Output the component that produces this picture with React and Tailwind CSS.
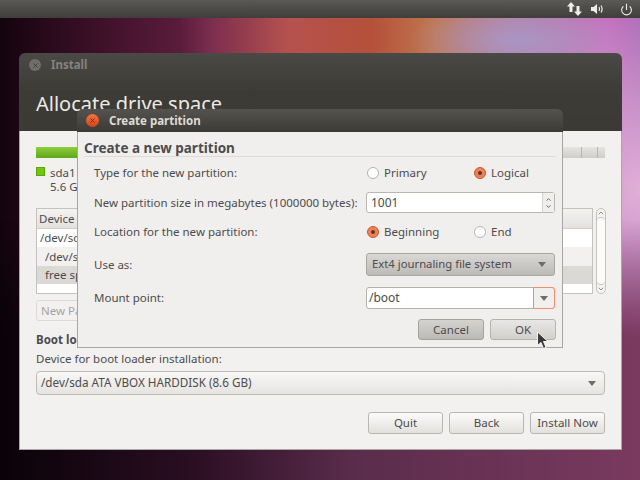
import { ChevronDown, ChevronUp, Power, X } from "lucide-react";

const font = "font-['Noto_Sans','Open_Sans',sans-serif]";

function Arrow({ className = "" }) {
  return <span className={`block w-0 h-0 border-x-[4px] border-x-transparent border-t-[5px] border-t-[#6f6d68] ${className}`} />;
}

function Radio({ label, on, width }) {
  return (
    <div className={`flex items-center gap-[5px] ${width}`}>
      {on ? (
        <span className="w-[12px] h-[12px] rounded-full border border-[#c8592e] bg-[#ee8155] flex items-center justify-center">
          <span className="w-[4px] h-[4px] rounded-full bg-[#5a3528]" />
        </span>
      ) : (
        <span className="w-[12px] h-[12px] rounded-full border border-[#b5b3ae] bg-white" />
      )}
      <span>{label}</span>
    </div>
  );
}

function Row({ label, height, children }) {
  return (
    <div className={`flex items-center ${height}`}>
      <div className="w-[272px] shrink-0 whitespace-nowrap">{label}</div>
      <div className="w-[189px]">{children}</div>
    </div>
  );
}

function PlainButton({ children }) {
  return (
    <button className="w-[75px] h-[22px] rounded-[3px] border border-[#b9b7b1] bg-gradient-to-b from-[#fbfbfa] to-[#e3e1de] text-[#4c4c4c]">
      {children}
    </button>
  );
}

function InstallWindow() {
  return (
    <div className="absolute left-[19px] top-[53px] w-[603px] h-[397px] flex flex-col rounded-t-[6px] overflow-hidden">
      <div className="h-[78px] bg-gradient-to-b from-[#4a4945] via-[#3d3b36] to-[#3c3a35]">
        <div className="h-[24px] flex items-center pl-[10px] gap-[10px] text-[#85837c] font-bold text-[11.5px]">
          <span className="w-[12px] h-[12px] rounded-full bg-[#706e69] flex items-center justify-center">
            <X size={7} strokeWidth={3} className="text-[#3c3a35]" />
          </span>
          Install
        </div>
        <div className="pl-[17px] pt-[13px] text-[20px] leading-[28px] text-[#eceae6]">Allocate drive space</div>
      </div>
      <div className="flex-1 bg-[#f2f1f0] pl-[16px] pt-[16px] text-[11.5px] text-[#4c4c4c] border-b border-x border-[#a9a7a3]">
        <div className="h-[11px] w-[569px] flex bg-gradient-to-b from-[#e6e5e2] to-[#cfcdc9]">
          <div className="w-[220px] bg-gradient-to-b from-[#8fce3c] to-[#5fa818]" />
          <div className="ml-auto w-[16px] border-l border-[#b8b6b1]" />
          <div className="w-[8px] border-l border-[#b8b6b1]" />
        </div>
        <div className="mt-[8px] h-[36px] flex gap-[5px] leading-[14px]">
          <span className="w-[9px] h-[9px] mt-[1px] bg-[#6fc80f] border border-[#5ba50e]" />
          <div>
            <div>sda1</div>
            <div>5.6 GB</div>
          </div>
        </div>
        <div className="mt-[6px] flex gap-[3px] items-start">
          <div className="w-[557px] h-[86px] border border-[#c4c2bd] bg-white">
            <div className="h-[20px] px-[2px] flex items-center bg-gradient-to-b from-[#f4f3f2] to-[#e4e2df] border-b border-[#cfcdc9]">Device</div>
            <div className="h-[18px] px-[3px] flex items-center">/dev/sda</div>
            <div className="h-[19px] pl-[8px] flex items-center bg-[#f2f1f0]">/dev/sda1</div>
            <div className="h-[18px] pl-[8px] flex items-center bg-[#dbd9d5]">free space</div>
          </div>
          <div className="w-[10px] h-[86px] rounded-[5px] border border-[#c4c2bd] bg-[#f4f3f2] flex flex-col items-center justify-between">
            <ChevronUp size={8} strokeWidth={2.5} className="text-[#7c7a75]" />
            <div className="flex-1 w-full rounded-[5px] border-y border-[#c4c2bd] bg-[#fbfbfa]" />
            <ChevronDown size={8} strokeWidth={2.5} className="text-[#7c7a75]" />
          </div>
        </div>
        <div className="mt-[6px] h-[21px] w-[130px] rounded-[3px] border border-[#dcdad6] flex items-center pl-[4px] text-[#a6a4a0] whitespace-nowrap">New Partition Table...</div>
        <div className="mt-[11px] font-bold leading-[16px]">Boot loader</div>
        <div className="mt-[3px] leading-[16px]">Device for boot loader installation:</div>
        <div className="mt-[4px] h-[24px] w-[569px] rounded-[4px] border border-[#bdbbb6] bg-gradient-to-b from-[#f8f8f7] to-[#e6e4e1] flex items-center justify-between pl-[4px] pr-[8px] text-[11.7px]">
          /dev/sda ATA VBOX HARDDISK (8.6 GB)
          <Arrow />
        </div>
        <div className="mt-[17px] w-[569px] flex justify-end gap-[6px]">
          <PlainButton>Quit</PlainButton>
          <PlainButton>Back</PlainButton>
          <PlainButton>Install Now</PlainButton>
        </div>
      </div>
    </div>
  );
}

function PartitionDialog() {
  return (
    <div className="absolute left-[77px] top-[109px] w-[486px] h-[239px] flex flex-col rounded-t-[6px] overflow-hidden text-[11.5px] text-[#4c4c4c]">
      <div className="h-[23px] shrink-0 pl-[9px] flex items-center gap-[10px] bg-gradient-to-b from-[#55534f] to-[#3c3a35] text-[#dfdbd2] font-bold text-[11.5px]">
        <span className="w-[13px] h-[13px] rounded-full bg-gradient-to-b from-[#f4733b] to-[#d4441a] flex items-center justify-center">
          <X size={7} strokeWidth={3} className="text-[#6b2a12]" />
        </span>
        Create partition
      </div>
      <div className="flex-1 bg-[#f0efee] border-x border-b border-[#a9a7a3] pl-[6px] pr-[6px]">
        <div className="h-[25px] pt-[6px] font-bold text-[13.5px] leading-[20px] border-b border-[#dddbd8]">Create a new partition</div>
        <div className="pl-[10px]">
          <Row label="Type for the new partition:" height="h-[31px]">
            <div className="flex pl-[1px]">
              <Radio label="Primary" width="w-[107px]" />
              <Radio label="Logical" on />
            </div>
          </Row>
          <Row label="New partition size in megabytes (1000000 bytes):" height="h-[29px]">
            <div className="h-[21px] rounded-[3px] border border-[#b9b7b1] bg-white flex items-center justify-between pl-[4px] text-[12px]">
              1001
              <div className="w-[12px] h-full border-l border-[#d6d4d0] bg-[#f0efee] flex flex-col items-center justify-center text-[#5c5a56]">
                <ChevronUp size={7} strokeWidth={3} />
                <ChevronDown size={7} strokeWidth={3} />
              </div>
            </div>
          </Row>
          <Row label="Location for the new partition:" height="h-[30px]">
            <div className="flex pl-[1px]">
              <Radio label="Beginning" on width="w-[107px]" />
              <Radio label="End" />
            </div>
          </Row>
          <Row label="Use as:" height="h-[35px]">
            <div className="h-[23px] rounded-[3px] border border-[#a9a7a2] bg-gradient-to-b from-[#d9d8d5] to-[#bdbbb7] flex items-center justify-between pl-[5px] pr-[8px] text-[11.3px] whitespace-nowrap">
              Ext4 journaling file system
              <Arrow />
            </div>
          </Row>
          <Row label="Mount point:" height="h-[32px]">
            <div className="h-[22px] rounded-[3px] border border-[#b4b2ad] bg-white flex items-center justify-between pl-[2px] text-[12px]">
              /boot
              <div className="w-[22px] h-[22px] -mr-px rounded-r-[3px] border border-[#ee8f6c] bg-[#f0efee] flex items-center justify-center">
                <Arrow />
              </div>
            </div>
          </Row>
        </div>
        <div className="mt-[5px] flex justify-end gap-[6px]">
          <button className="w-[66px] h-[21px] rounded-[3px] border border-[#a5a39e] bg-gradient-to-b from-[#d4d3d0] to-[#bcbab6]">Cancel</button>
          <button className="w-[66px] h-[21px] rounded-[3px] border border-[#b5b3ae] bg-gradient-to-b from-[#e8e7e5] to-[#d2d0cd]">OK</button>
        </div>
      </div>
    </div>
  );
}

export default function App() {
  return (
    <div className={`relative w-[640px] h-[480px] overflow-hidden ${font} bg-[radial-gradient(ellipse_110px_40px_at_520px_40px,#a995c4_0%,transparent_100%),radial-gradient(ellipse_160px_220px_at_640px_190px,#e0b0d8_0%,transparent_100%),linear-gradient(90deg,#14040e_0%,#3d1028_15%,#5a1c3c_28%,#7c2d4e_33%,#b5524e_45%,#b5503a_58%,#c07850_68%,#b880a0_80%,#c060b8_95%,#a060b0_100%)]`}>
      <div className="absolute inset-x-0 bottom-0 h-[260px] bg-[linear-gradient(90deg,#0a0208_0%,#2a0e22_30%,#5a2c4c_55%,#7a3a60_100%)] [mask-image:linear-gradient(to_top,black_55%,transparent)]" />
      <div className="relative h-[18px] bg-gradient-to-b from-[#5a5955] to-[#3f3e3a] flex items-center justify-end text-[#eeeeea]">
        <svg width="15" height="14" viewBox="0 0 15 14" fill="currentColor">
          <path d="M4 0 L8 4.5 L5.5 4.5 L5.5 10 L2.5 10 L2.5 4.5 L0 4.5 Z" />
          <path d="M11 14 L15 9.5 L12.5 9.5 L12.5 4 L9.5 4 L9.5 9.5 L7 9.5 Z" />
        </svg>
        <svg className="ml-[9px]" width="13" height="12" viewBox="0 0 13 12" fill="none">
          <path d="M0 4 L2.5 4 L6 1 L6 11 L2.5 8 L0 8 Z" fill="currentColor" />
          <path d="M8 4 Q9.2 6 8 8 M10 2.5 Q12.2 6 10 9.5" stroke="currentColor" strokeWidth="1.2" />
        </svg>
        <Power size={13} strokeWidth={2} className="ml-[16px] mr-[7px]" />
      </div>
      <InstallWindow />
      <PartitionDialog />
      <svg className="absolute left-[536px] top-[331px]" width="14" height="19" viewBox="0 0 14 19">
        <path d="M1.5 1 L1.5 14.5 L5 11.5 L7.5 17.5 L10 16.3 L7.5 10.5 L12 10.5 Z" fill="#3a3a3a" stroke="#f4f4f4" strokeWidth="1" />
      </svg>
    </div>
  );
}
